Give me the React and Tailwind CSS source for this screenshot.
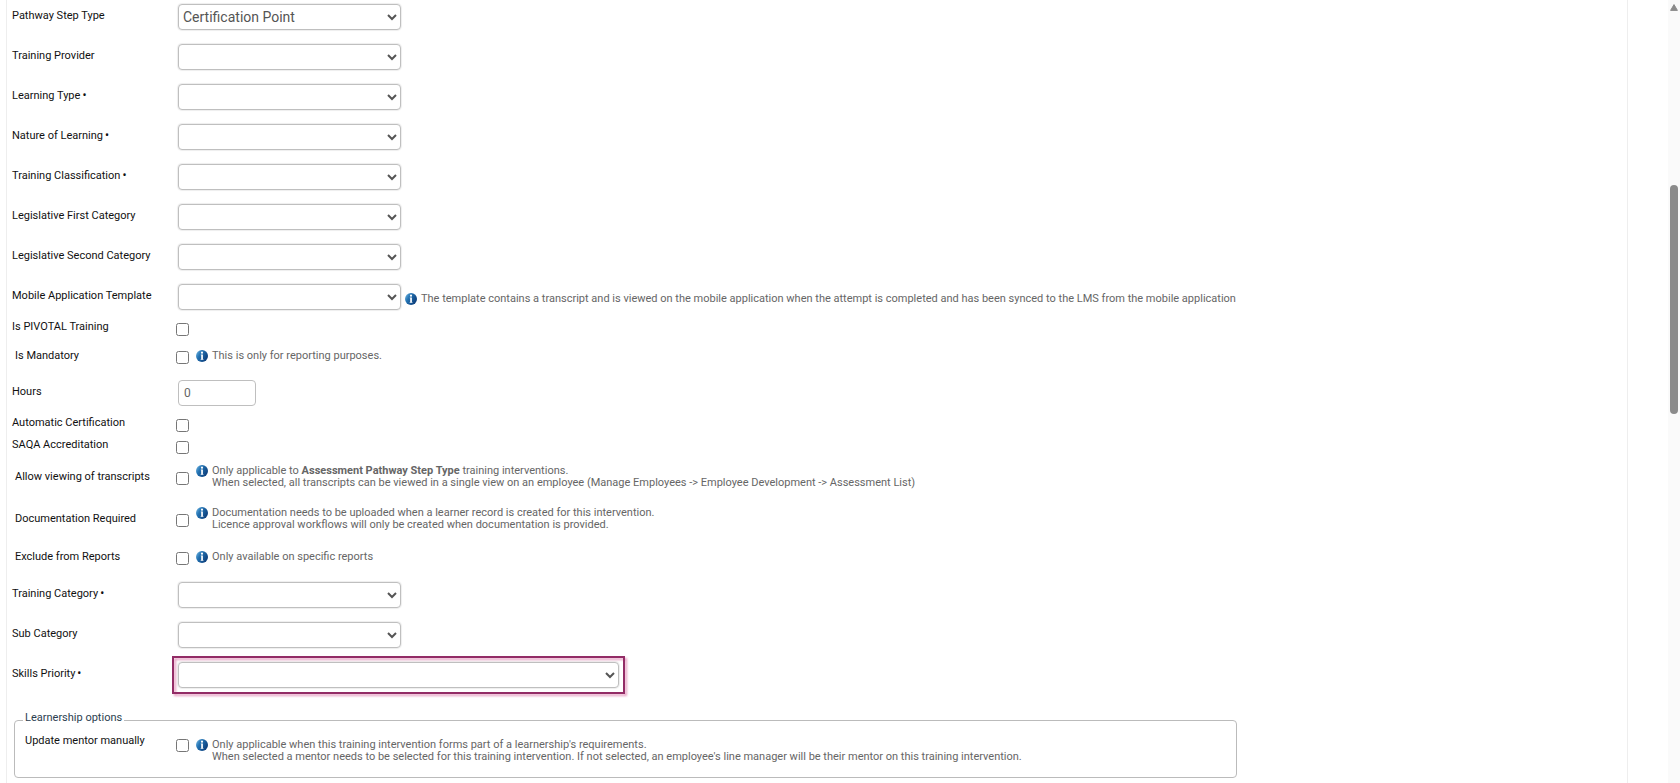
import React, { useState } from 'react';

const InfoIcon = () => (
  <svg className="w-3 h-3 shrink-0" viewBox="0 0 12 12" aria-hidden="true">
    <defs>
      <linearGradient id="info-fill" x1="0" y1="0" x2="1" y2="0.6">
        <stop offset="0" stopColor="#7cc0e8" />
        <stop offset="0.4" stopColor="#2473b3" />
        <stop offset="1" stopColor="#0d3f7c" />
      </linearGradient>
    </defs>
    <circle cx="6" cy="6" r="6" fill="url(#info-fill)" />
    <circle cx="6" cy="2.7" r="1.1" fill="#fff" />
    <path d="M4.8 4.5h2.1v4.6h.5v.7H4.7v-.7h.5V5.2h-.4z" fill="#fff" />
  </svg>
);

const Note = ({ children, className = '' }) => (
  <div className={`flex items-start gap-1 leading-3 text-[#666] ${className}`}>
    <InfoIcon />
    <p>{children}</p>
  </div>
);

const Label = ({ id, required, className = '', children }) => (
  <label htmlFor={id} className={`w-[166px] shrink-0 leading-4 ${className}`}>
    {children}
    {required && <span className="ml-0.5 text-xs leading-none">•</span>}
  </label>
);

const SelectRow = ({ id, label, required, options = [], note, highlight }) => {
  const [value, setValue] = useState(options[0] || '');

  return (
    <div className="flex items-center h-10">
      <Label id={id} required={required} className="pb-0.5">
        {label}
      </Label>
      <div className={`relative ${highlight ? 'w-[441px]' : 'w-[223px]'}`}>
        <select
          id={id}
          value={value}
          onChange={(e) => setValue(e.target.value)}
          className="block w-full h-[26px] rounded border border-[#bfbfbf] bg-white text-sm text-[#555] shadow-[0_0_1px_1px_#eee]"
        >
          {options.length === 0 && <option value="" />}
          {options.map((option) => (
            <option key={option}>{option}</option>
          ))}
        </select>
        {highlight && (
          <div className="absolute -inset-1.5 border-2 border-[#932c66] pointer-events-none drop-shadow-[2px_2px_1px_#e59cc0]" />
        )}
      </div>
      {note && <Note className="ml-1 pt-1">{note}</Note>}
    </div>
  );
};

const CheckRow = ({ id, label, height, indent, note }) => (
  <div className={`flex items-center ${height}`}>
    <Label id={id} className={indent ? 'pb-0.5 pl-[3px]' : 'pb-1'}>
      {label}
    </Label>
    <input id={id} type="checkbox" className="-ml-0.5 w-[13px] h-[13px]" />
    {note && <Note className="ml-[7px] pb-[3px]">{note}</Note>}
  </div>
);

const Scrollbar = () => (
  <div className="flex flex-col items-center w-3 shrink-0 bg-[#fafafa]" aria-hidden="true">
    <svg className="w-2 h-2 mt-1" viewBox="0 0 8 8">
      <path d="M4 0.6 7.4 6.4H0.6z" fill="#8b8b8b" stroke="#8b8b8b" strokeLinejoin="round" />
    </svg>
    <div className="w-2 h-[229px] mt-[173px] rounded-full bg-[#8b8b8b]" />
  </div>
);

const App = () => {
  const [hours, setHours] = useState('0');

  return (
    <div className="flex min-h-screen overflow-hidden bg-white font-[Roboto,sans-serif] text-[11px] text-[#111]">
      <form className="flex-1 ml-1.5 mr-10 border-x border-[#eee] pl-[5px]">
        {/* Classification */}
        <div className="-mt-[3px]">
          <SelectRow id="step-type" label="Pathway Step Type" options={['Certification Point']} />
          <SelectRow id="provider" label="Training Provider" />
          <SelectRow id="learning-type" label="Learning Type" required />
          <SelectRow id="nature" label="Nature of Learning" required />
          <SelectRow id="classification" label="Training Classification" required />
          <SelectRow id="first-category" label="Legislative First Category" />
          <SelectRow id="second-category" label="Legislative Second Category" />
          <SelectRow
            id="mobile-template"
            label="Mobile Application Template"
            note="The template contains a transcript and is viewed on the mobile application when the attempt is completed and has been synced to the LMS from the mobile application"
          />
        </div>

        <CheckRow id="pivotal" label="Is PIVOTAL Training" height="h-6" />
        <CheckRow
          id="mandatory"
          label="Is Mandatory"
          height="h-8"
          indent
          note="This is only for reporting purposes."
        />

        <div className="flex items-center h-10">
          <Label id="hours" className="pb-0.5">
            Hours
          </Label>
          <input
            id="hours"
            type="text"
            value={hours}
            onChange={(e) => setHours(e.target.value)}
            className="w-[78px] h-[26px] px-[5px] rounded border border-[#bfbfbf] text-xs text-[#666]"
          />
        </div>

        <CheckRow id="auto-cert" label="Automatic Certification" height="h-6" />
        <CheckRow id="saqa" label="SAQA Accreditation" height="h-5" />
        <CheckRow
          id="transcripts"
          label="Allow viewing of transcripts"
          height="h-[42px]"
          indent
          note={
            <>
              Only applicable to <b>Assessment Pathway Step Type</b> training interventions.
              <br />
              When selected, all transcripts can be viewed in a single view on an employee (Manage
              Employees -&gt; Employee Development -&gt; Assessment List)
            </>
          }
        />
        <CheckRow
          id="documentation"
          label="Documentation Required"
          height="h-[42px]"
          indent
          note={
            <>
              Documentation needs to be uploaded when a learner record is created for this
              intervention.
              <br />
              Licence approval workflows will only be created when documentation is provided.
            </>
          }
        />
        <CheckRow
          id="exclude"
          label="Exclude from Reports"
          height="h-[34px]"
          indent
          note="Only available on specific reports"
        />

        <SelectRow id="category" label="Training Category" required />
        <SelectRow id="sub-category" label="Sub Category" />
        <SelectRow id="priority" label="Skills Priority" required highlight />

        {/* Learnership */}
        <fieldset className="max-w-[1223px] mt-[15px] ml-0.5 mb-1 pl-2.5 pb-3.5 border border-[#bbb] rounded">
          <legend className="-ml-0.5 px-0.5 pb-1 leading-4 text-[#2c3e50]">
            Learnership options
          </legend>
          <div className="flex items-start pt-[3px]">
            <label htmlFor="mentor" className="w-[153px] shrink-0 leading-4">
              Update mentor manually
            </label>
            <input id="mentor" type="checkbox" className="-ml-0.5 mt-1.5 w-[13px] h-[13px]" />
            <Note className="ml-[7px] mt-1.5">
              Only applicable when this training intervention forms part of a learnership's
              requirements.
              <br />
              When selected a mentor needs to be selected for this training intervention. If not
              selected, an employee's line manager will be their mentor on this training
              intervention.
            </Note>
          </div>
        </fieldset>
      </form>
      <Scrollbar />
    </div>
  );
};

export default App;
